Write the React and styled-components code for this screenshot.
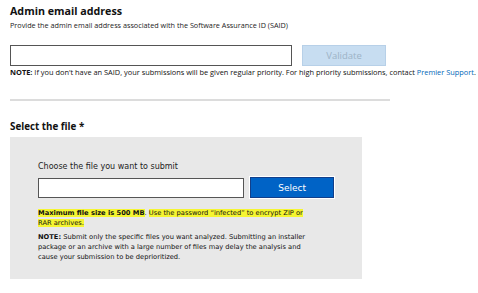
import React from "react";
import styled, { createGlobalStyle } from "styled-components";

const GlobalStyle = createGlobalStyle`
  body {
    margin: 0;
    background: #fff;
    font-family: "Open Sans", "Liberation Sans", sans-serif;
    color: #111;
  }
`;

export default function App() {
  return (
    <>
      <GlobalStyle />
      <Page>
        <Heading size={10.7} top={1}>Admin email address</Heading>
        <Hint>Provide the admin email address associated with the Software Assurance ID (SAID)</Hint>
        <Row>
          <TextInput width={282} height={21} />
          <Button disabled width={84} height={21}>Validate</Button>
        </Row>
        <Note>
          <b>NOTE:</b> If you don't have an SAID, your submissions will be given regular priority. For high
          priority submissions, contact <Link>Premier Support</Link>.
        </Note>
        <Divider />
        <Heading size={9.8} top={19}>Select the file *</Heading>
        <FileBox>
          <Label>Choose the file you want to submit</Label>
          <Row gap={6} top={5}>
            <TextInput width={209} height={20} />
            <Button width={85} height={21}>Select</Button>
          </Row>
          <SmallText top={10}>
            <Mark>
              <b>Maximum file size is 500 MB</b>
            </Mark>
            . <Mark>Use the password “infected” to encrypt ZIP or RAR archives.</Mark>
          </SmallText>
          <SmallText top={4}>
            <b>NOTE:</b> Submit only the specific files you want analyzed. Submitting an installer package or
            an archive with a large number of files may delay the analysis and cause your submission to be
            deprioritized.
          </SmallText>
        </FileBox>
      </Page>
    </>
  );
}

const Page = styled.div`
  padding: 3px 10px 0;
`;

const Heading = styled.h2`
  margin: ${(p) => p.top || 0}px 0 0;
  font-size: ${(p) => p.size}px;
  line-height: 14px;
  font-weight: 700;
  color: #111;
`;

const Hint = styled.p`
  margin: 2px 0 0;
  font-size: 7.25px;
  line-height: 10px;
  color: #222;
`;

const Row = styled.div`
  display: flex;
  align-items: center;
  gap: ${(p) => p.gap || 10}px;
  height: 21px;
  margin-top: ${(p) => p.top || 15}px;
`;

const TextInput = styled.input`
  box-sizing: border-box;
  width: ${(p) => p.width}px;
  height: ${(p) => p.height}px;
  margin: 0;
  border: 1px solid #555;
  background: #fff;
  padding: 0 4px;
`;

const Button = styled.button`
  box-sizing: border-box;
  width: ${(p) => p.width}px;
  height: ${(p) => p.height}px;
  margin: 0;
  padding: 0;
  font-family: "DejaVu Sans", sans-serif;
  font-size: 9px;
  color: #fff;
  background: #0063c6;
  border: 1px solid #123f8a;
  outline: 1px solid #fff;

  &:disabled {
    background: #c7ddf1;
    border-color: #b7d0e8;
    outline: none;
    color: #9db3c6;
    font-family: "Open Sans", sans-serif;
    font-size: 9.5px;
  }
`;

const Note = styled.p`
  margin: 1px 0 0;
  font-size: 7.4px;
  line-height: 10px;
  white-space: nowrap;
  color: #111;
`;

const Link = styled.span`
  color: #0067b8;
`;

const Divider = styled.hr`
  width: 380px;
  margin: 22px 0 0;
  border: none;
  border-top: 2px solid #dcdcdc;
`;

const FileBox = styled.div`
  box-sizing: border-box;
  width: 352px;
  height: 142px;
  margin-top: 3px;
  padding: 25px 28px 0;
  background: #e8e8e8;
  font-family: "DejaVu Sans", sans-serif;
`;

const Label = styled.div`
  font-size: 8px;
  line-height: 10px;
  color: #222;
`;

const SmallText = styled.p`
  width: 276px;
  margin: ${(p) => p.top}px 0 0;
  font-size: 6.7px;
  line-height: 10px;
  color: #111;
`;

const Mark = styled.span`
  background: #f5f531;
`;
